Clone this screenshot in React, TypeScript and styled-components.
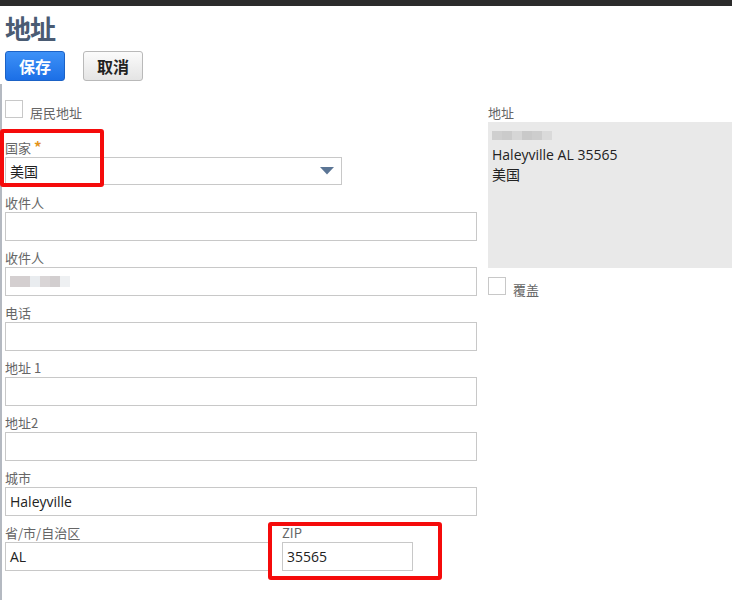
import styled, { createGlobalStyle } from "styled-components";

const GlobalStyle = createGlobalStyle`
  html, body {
    margin: 0;
    padding: 0;
    background: #ffffff;
  }
  body {
    font-family: "Open Sans", "Noto Sans CJK SC", sans-serif;
    color: #222;
  }
`;

type Field = { label: string; value?: string; redacted?: boolean };

const fields: Field[] = [
  { label: "收件人" },
  { label: "收件人", redacted: true },
  { label: "电话" },
  { label: "地址 1" },
  { label: "地址2" },
  { label: "城市", value: "Haleyville" },
];

const Redacted = ({ cells, height }: { cells: string[]; height: number }) => (
  <RedactRow>
    {cells.map((c, i) => (
      <RedactCell key={i} $color={c} $height={height} />
    ))}
  </RedactRow>
);

const CheckRow = ({ label }: { label: string }) => (
  <CheckLine>
    <Box />
    <CheckLabel>{label}</CheckLabel>
  </CheckLine>
);

const App = () => {
  return (
    <>
      <GlobalStyle />
      <TopBar />
      <Header>
        <Title>地址</Title>
        <Actions>
          <Button $primary>保存</Button>
          <Button>取消</Button>
        </Actions>
      </Header>
      <Body>
        <LeftCol>
          <CheckRow label="居民地址" />
          <FieldBox $width={337} $gap={20}>
            <Label>
              国家 <Star>*</Star>
            </Label>
            <Select>
              <span>美国</span>
              <svg width="14" height="8" viewBox="0 0 14 8">
                <path d="M0 0 H14 L7 7.5 Z" fill="#5b7595" />
              </svg>
            </Select>
            <Highlight $left={-5} $top={-9} $width={104} $height={58} />
          </FieldBox>
          {fields.map((f, i) => (
            <FieldBox key={i} $gap={i === 0 ? 9 : 8}>
              <Label>{f.label}</Label>
              <Input>
                {f.value}
                {f.redacted && (
                  <Redacted
                    cells={["#d4cfd0", "#d4cfd0", "#e9ecef", "#d9d5d6", "#d2cecf", "#eef0f2"]}
                    height={11}
                  />
                )}
              </Input>
            </FieldBox>
          ))}
          <SplitRow>
            <FieldBox $width={265}>
              <Label>省/市/自治区</Label>
              <Input>AL</Input>
            </FieldBox>
            <FieldBox $width={131}>
              <Label>ZIP</Label>
              <Input>35565</Input>
              <Highlight $left={-14} $top={-2} $width={174} $height={58} />
            </FieldBox>
          </SplitRow>
        </LeftCol>
        <RightCol>
          <Label>地址</Label>
          <AddressBox>
            <Line>
              <Redacted
                cells={["#cfcfcf", "#cbcbcb", "#d6d6d6", "#c9c9c9", "#cdcdcd", "#dadada"]}
                height={9}
              />
            </Line>
            <Line>Haleyville AL 35565</Line>
            <Line>美国</Line>
          </AddressBox>
          <CheckRow label="覆盖" />
        </RightCol>
      </Body>
    </>
  );
};

const TopBar = styled.div`
  height: 6px;
  background: #2b2b2b;
`;

const Header = styled.header`
  padding: 6px 0 0 5px;
  display: flex;
  flex-direction: column;
  gap: 7px;
`;

const Title = styled.h1`
  margin: 0;
  font-size: 26px;
  line-height: 32px;
  font-weight: 700;
  color: #4a5b73;
  font-family: "Noto Sans CJK SC", sans-serif;
  letter-spacing: -1px;
`;

const Actions = styled.div`
  display: flex;
  gap: 18px;
`;

const Button = styled.button<{ $primary?: boolean }>`
  width: 60px;
  height: 30px;
  padding: 0;
  border-radius: 3px;
  font-family: "Noto Sans CJK SC", sans-serif;
  font-size: 16px;
  font-weight: 700;
  border: 1px solid ${(p) => (p.$primary ? "#1b62c6" : "#b9b9b9")};
  color: ${(p) => (p.$primary ? "#ffffff" : "#222222")};
  background: ${(p) =>
    p.$primary
      ? "linear-gradient(#3d91f7, #1c6fe6)"
      : "linear-gradient(#fbfbfb, #e4e4e4)"};
`;

const Body = styled.main`
  margin-top: 3px;
  border-left: 2px solid #b4b9c1;
  padding: 15px 0 30px 3px;
  display: flex;
  gap: 11px;
`;

const LeftCol = styled.div`
  width: 472px;
  display: flex;
  flex-direction: column;
`;

const RightCol = styled.div`
  flex: 1;
  padding-top: 5px;
  display: flex;
  flex-direction: column;
`;

const CheckLine = styled.div`
  display: flex;
  align-items: center;
  gap: 7px;
  height: 18px;
  margin-top: 1px;
`;

const Box = styled.span`
  width: 16px;
  height: 16px;
  border: 1px solid #c8c8c8;
  background: #fff;
  flex: none;
`;

const CheckLabel = styled.span`
  font-family: "Noto Sans CJK SC", sans-serif;
  font-size: 13px;
  color: #666;
  margin-top: 6px;
`;

const FieldBox = styled.div<{ $width?: number; $gap?: number }>`
  position: relative;
  width: ${(p) => (p.$width ? `${p.$width}px` : "100%")};
  margin-top: ${(p) => p.$gap ?? 8}px;
`;

const Label = styled.div`
  font-family: "Noto Sans CJK SC", sans-serif;
  font-size: 13px;
  line-height: 18px;
  color: #666;
`;

const Star = styled.span`
  color: #e3941c;
  font-size: 15px;
  font-weight: 700;
`;

const Input = styled.div`
  height: 27px;
  border: 1px solid #c8c8c8;
  background: #fff;
  box-sizing: content-box;
  padding: 0 4px;
  display: flex;
  align-items: center;
  font-size: 14px;
  color: #222;
`;

const Select = styled(Input)`
  height: 26px;
  justify-content: space-between;
  padding-right: 7px;
  font-family: "Noto Sans CJK SC", sans-serif;
`;

const SplitRow = styled.div`
  display: flex;
  gap: 12px;
`;

const Highlight = styled.div<{ $left: number; $top: number; $width: number; $height: number }>`
  position: absolute;
  left: ${(p) => p.$left}px;
  top: ${(p) => p.$top}px;
  width: ${(p) => p.$width}px;
  height: ${(p) => p.$height}px;
  box-sizing: border-box;
  border: 4px solid #f50b0b;
  border-radius: 3px;
  pointer-events: none;
`;

const AddressBox = styled.div`
  height: 146px;
  background: #e9e9e9;
  padding: 3px 4px 0;
  box-sizing: border-box;
  margin-bottom: 8px;
`;

const Line = styled.div`
  height: 20px;
  line-height: 20px;
  font-size: 14px;
  color: #222;
  font-family: "Open Sans", "Noto Sans CJK SC", sans-serif;
  display: flex;
  align-items: center;
`;

const RedactRow = styled.div`
  display: flex;
  align-items: center;
`;

const RedactCell = styled.span<{ $color: string; $height: number }>`
  width: 10px;
  height: ${(p) => p.$height}px;
  background: ${(p) => p.$color};
`;

export default App;
